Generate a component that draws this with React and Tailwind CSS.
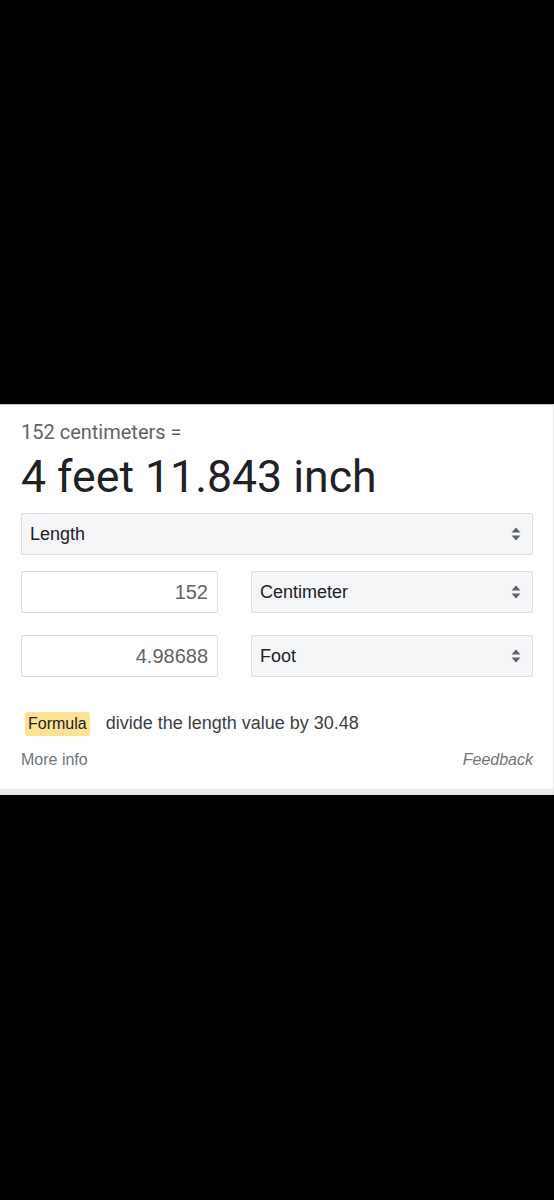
import React from 'react';

const Arrows = () => (
  <svg width="12" height="16" viewBox="0 0 12 16" className="shrink-0">
    <path d="M6 1.5 L10.5 6.5 H1.5 Z" fill="#5f6368" />
    <path d="M6 14.5 L10.5 9.5 H1.5 Z" fill="#5f6368" />
  </svg>
);

const SelectBox = ({ label, className = '' }) => (
  <div
    className={`flex items-center justify-between h-[42px] pl-[8px] pr-[10px] bg-[#f5f6f8] border border-[#dadce0] rounded-[2px] text-[18px] text-[#202124] ${className}`}
  >
    <span>{label}</span>
    <Arrows />
  </div>
);

const ValueBox = ({ value }) => (
  <div className="flex items-center justify-end h-[42px] w-[197px] pr-[9px] bg-white border border-[#dadce0] rounded-[2px] text-[20px] text-[#5f6368]">
    {value}
  </div>
);

export default function App() {
  return (
    <div className="bg-black min-h-[1200px] flex flex-col" style={{ fontFamily: '"Liberation Sans", Arial, sans-serif' }}>
      <div className="h-[404px]" />
      <div className="bg-white border-t border-[#bdbdbd] border-r border-r-[#e3e5e8]">
        <div className="pl-[21px] pr-[20px] pt-[15px] pb-[18px] flex flex-col">
          <div className="text-[20px] leading-[24px] text-[#5f6368]" style={{ fontFamily: 'Roboto, sans-serif' }}>
            152 centimeters =
          </div>
          <div className="text-[44.6px] leading-[52px] mt-[7px] text-[#202124]" style={{ fontFamily: 'Roboto, sans-serif' }}>
            4 feet 11.843 inch
          </div>
          <SelectBox label="Length" className="mt-[10px] h-[41px] w-[512px]" />
          <div className="flex gap-[33px] mt-[16px]">
            <ValueBox value="152" />
            <SelectBox label="Centimeter" className="w-[282px]" />
          </div>
          <div className="flex gap-[33px] mt-[22px]">
            <ValueBox value="4.98688" />
            <SelectBox label="Foot" className="w-[282px]" />
          </div>
          <div className="flex items-center mt-[33px] pl-[4px]">
            <span className="bg-[#fde293] rounded-[3px] px-[3px] py-[2px] text-[16px] leading-[20px] text-[#202124]">
              Formula
            </span>
            <span className="ml-[16px] text-[18px] text-[#3c4043]">divide the length value by 30.48</span>
          </div>
          <div className="flex justify-between mt-[12px] text-[16px] leading-[22px]">
            <span className="text-[#70757a]">More info</span>
            <span className="text-[#70757a] italic">Feedback</span>
          </div>
        </div>
        <div className="h-[6px] bg-[#e8eaed]" />
      </div>
    </div>
  );
}
